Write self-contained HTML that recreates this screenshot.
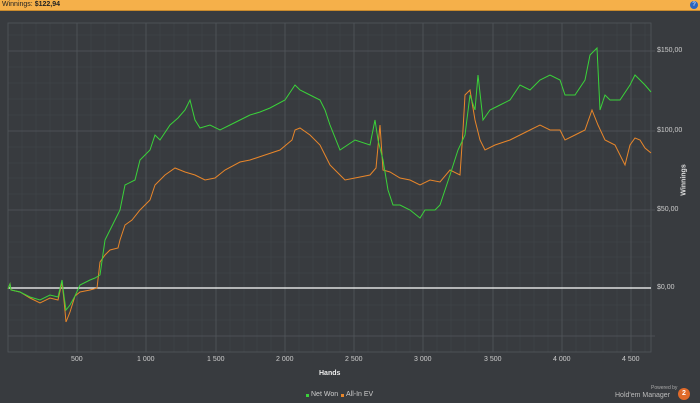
<!DOCTYPE html><html><head><style>
body{margin:0;width:700px;height:403px;background:#383b3f;overflow:hidden;font-family:"Liberation Sans",sans-serif}
.hdr{position:absolute;left:0;top:0;width:700px;height:10px;background:#f5b04a;border-bottom:1px solid #c98a2c;font-size:7px;color:#222;line-height:10px}
.t{position:absolute;font-size:7px;color:#ccc;line-height:8px}
</style></head><body>
<div class="hdr"><span style="margin-left:2px">Winnings: <b>$122,94</b></span>
<div style="position:absolute;right:2px;top:1px;width:8px;height:8px;border-radius:50%;background:#2a66c0;color:#fff;font-size:6px;line-height:8px;text-align:center">?</div></div>
<svg width="700" height="403" style="position:absolute;left:0;top:0">
<g stroke="#42464a" stroke-width="0.6">
<path d="M22 23V352M36 23V352M50 23V352M63 23V352M91 23V352M105 23V352M119 23V352M133 23V352M160 23V352M174 23V352M188 23V352M202 23V352M230 23V352M244 23V352M257 23V352M271 23V352M299 23V352M313 23V352M327 23V352M340 23V352M368 23V352M382 23V352M396 23V352M410 23V352M437 23V352M451 23V352M465 23V352M479 23V352M507 23V352M520 23V352M534 23V352M548 23V352M576 23V352M590 23V352M603 23V352M617 23V352M645 23V352"/>
<path d="M8 35H651M8 67H651M8 83H651M8 99H651M8 115H651M8 147H651M8 163H651M8 178H651M8 194H651M8 226H651M8 242H651M8 257H651M8 273H651M8 305H651M8 320H651"/>
</g>
<g stroke="#52575c" stroke-width="0.8">
<path d="M77 23V352M146 23V352M216 23V352M285 23V352M354 23V352M423 23V352M493 23V352M562 23V352M631 23V352"/>
<path d="M8 51H655M8 131H655M8 210H655M8 336H655"/>
<rect x="8" y="23" width="643" height="329" fill="none"/>
</g>
<path d="M8 288H651" stroke="#fff" stroke-width="1.3"/>
<polyline fill="none" stroke="#e8862a" stroke-width="1" points="8,289 10,284 11,290 20,292 30,298 40,303 50,298 58,300 62,282 64,300 66,322 70,312 75,296 80,292 90,290 97,288 100,262 105,255 110,250 118,248 120,240 125,225 132,220 140,210 150,200 155,185 165,175 175,168 185,172 195,175 205,180 215,178 225,170 240,162 250,160 265,155 280,150 292,140 295,130 300,128 310,135 320,145 325,155 330,165 335,170 345,180 355,178 370,175 376,168 380,125 383,170 390,172 400,178 410,180 420,185 430,180 440,182 450,170 460,175 463,130 465,95 470,90 475,120 480,140 485,150 495,145 510,140 520,135 530,130 540,125 550,130 560,130 565,140 575,135 585,130 592,110 598,125 605,140 615,145 625,165 630,145 635,138 640,140 645,148 651,153"/>
<polyline fill="none" stroke="#3ad23a" stroke-width="1" points="8,289 10,284 11,290 20,292 30,297 40,300 50,295 58,297 62,280 64,296 66,310 70,305 75,296 80,285 90,280 95,278 100,275 105,240 110,230 120,210 125,185 135,180 140,160 150,150 155,135 160,140 170,125 178,118 185,110 190,100 195,120 200,128 210,125 220,130 230,125 240,120 250,115 260,112 270,108 285,100 295,85 300,90 310,95 320,100 325,110 330,125 340,150 355,140 370,145 375,120 378,140 383,160 388,190 393,205 400,205 410,210 420,218 425,210 435,210 440,205 450,175 458,150 465,135 470,95 475,110 478,75 483,120 490,110 500,105 510,100 520,85 530,90 540,80 550,75 560,80 565,95 575,95 585,80 590,55 597,48 600,110 605,95 610,100 620,100 630,85 635,75 645,85 651,92"/>
<rect x="306" y="394" width="3" height="3" fill="#3ad23a"/><rect x="341" y="394" width="3" height="3" fill="#e8862a"/>
<circle cx="684" cy="394" r="6" fill="#e06a2a"/>
</svg>
<div class="t" style="left:657px;top:47px">$150,00</div>
<div class="t" style="left:657px;top:127px">$100,00</div>
<div class="t" style="left:657px;top:206px">$50,00</div>
<div class="t" style="left:657px;top:284px">$0,00</div>
<div class="t" style="left:669px;top:176px;transform:rotate(-90deg);font-weight:bold;color:#ddd">Winnings</div>
<div class="t" style="left:71px;top:356px">500</div>
<div class="t" style="left:137px;top:356px">1 000</div>
<div class="t" style="left:207px;top:356px">1 500</div>
<div class="t" style="left:276px;top:356px">2 000</div>
<div class="t" style="left:345px;top:356px">2 500</div>
<div class="t" style="left:414px;top:356px">3 000</div>
<div class="t" style="left:484px;top:356px">3 500</div>
<div class="t" style="left:553px;top:356px">4 000</div>
<div class="t" style="left:622px;top:356px">4 500</div>
<div class="t" style="left:319px;top:370px;font-weight:bold;color:#eee">Hands</div>
<div class="t" style="left:311px;top:391px">Net Won</div>
<div class="t" style="left:346px;top:391px">All-In EV</div>
<div class="t" style="left:651px;top:385px;font-size:5px;color:#aaa;line-height:6px">Powered by</div>
<div class="t" style="left:615px;top:392px;color:#bbb">Hold'em Manager</div>
<div class="t" style="left:682px;top:390px;color:#fff;font-weight:bold">2</div>
</body></html>
